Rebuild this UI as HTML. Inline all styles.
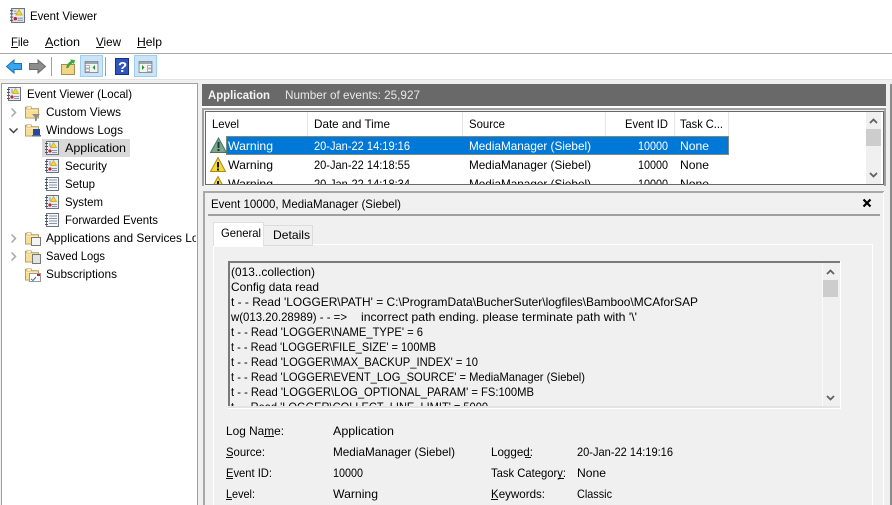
<!DOCTYPE html>
<html><head><meta charset="utf-8"><title>Event Viewer</title>
<style>
html,body{margin:0;padding:0;background:#f0f0f0;overflow:hidden}
svg{display:block}
text{font-family:"Liberation Sans",sans-serif;font-size:12px;fill:#000;white-space:pre}
</style></head><body>
<svg width="892" height="505" viewBox="0 0 892 505" xmlns="http://www.w3.org/2000/svg">
<defs>
<clipPath id="cTree"><rect x="2" y="84" width="194" height="421"/></clipPath>
<clipPath id="cList"><rect x="206" y="112" width="660" height="72"/></clipPath>
<clipPath id="cBody"><rect x="230" y="263" width="592" height="143"/></clipPath>
<symbol id="warn" viewBox="0 0 16 15" overflow="visible">
<path d="M8 .5L15.500 14.500H.5Z" fill="#f7d933" stroke="#a98a12"/>
<rect x="7" y="5" width="2" height="5.500" fill="#111"/><rect x="7" y="11.500" width="2" height="2" fill="#111"/>
</symbol>
<symbol id="log" viewBox="0 0 14 14" overflow="visible">
<rect x="1.500" y=".5" width="12" height="13" fill="#f4f6fa" stroke="#6b7280"/>
<path d="M4 3h8M4 5.500h8M4 8h8M4 10.500h8" stroke="#8b97a8"/>
<path d="M0 2.500h3M0 5.500h3M0 8.500h3M0 11.500h3" stroke="#555"/>
</symbol>
<symbol id="logw" viewBox="0 0 14 14" overflow="visible">
<rect x="1.500" y=".5" width="12" height="13" fill="#e6ebf4" stroke="#6b7280"/>
<path d="M7 9.500h5M7 11.500h5M4 3h2M4 5h2" stroke="#8b97a8"/>
<path d="M0 2.500h3M0 5.500h3M0 8.500h3M0 11.500h3" stroke="#555"/>
<path d="M8.500 1.500l3 5h-6z" fill="#f7d933" stroke="#c9a514" stroke-width=".7"/>
<circle cx="5" cy="10" r="1.600" fill="#c4242b"/>
</symbol>
<symbol id="folder" viewBox="0 0 16 15" overflow="visible">
<path d="M.5 2.500h6l1 1.500h7v10H.5z" fill="#f8dd95" stroke="#b49a5c"/>
<path d="M2 1.500h4.500v3H2z" fill="#fff4cf" stroke="#c5ad70" stroke-width=".7"/>
<path d="M1.500 5.500h12" stroke="#fff3c9"/>
</symbol>
<symbol id="winic" viewBox="0 0 16 14" overflow="visible">
<rect x=".5" y=".5" width="15" height="13" fill="#f4f4f4" stroke="#77838c"/>
<rect x="1" y="1" width="14" height="2.500" fill="#9aa5ad"/>
</symbol>
</defs>

<!-- window base -->
<rect width="892" height="505" fill="#f0f0f0"/>
<rect width="892" height="53" fill="#fff"/>
<rect y="53" width="892" height="1" fill="#a8a8a8"/>
<rect y="54" width="892" height="25" fill="#fff"/>
<rect y="79" width="892" height="1" fill="#e3e3e3"/>

<!-- title -->
<use href="#logw" x="10" y="8" width="15" height="15"/>
<text x="30" y="20" textLength="67" lengthAdjust="spacingAndGlyphs">Event Viewer</text>

<!-- menu -->
<text x="11" y="46" textLength="18" lengthAdjust="spacingAndGlyphs">File</text><rect x="11" y="47" width="7" height="1" fill="#111"/>
<text x="45" y="46" textLength="35" lengthAdjust="spacingAndGlyphs">Action</text><rect x="45" y="47" width="8" height="1" fill="#111"/>
<text x="96" y="46" textLength="25" lengthAdjust="spacingAndGlyphs">View</text><rect x="96" y="47" width="8" height="1" fill="#111"/>
<text x="137" y="46" textLength="25" lengthAdjust="spacingAndGlyphs">Help</text><rect x="137" y="47" width="9" height="1" fill="#111"/>

<!-- toolbar -->
<path d="M6.500 66.500l7.500-6.500v3.500h7.500v6H14v3.500z" fill="#37a6ee" stroke="#1c6fb5"/>
<path d="M45.500 66.500l-7.500-6.500v3.500h-8.500v6H38v3.500z" fill="#8d8d8d" stroke="#6a6a6a"/>
<rect x="51" y="57" width="1" height="19" fill="#a0a0a0"/>
<path d="M61.500 64.500h13v10h-13z" fill="#f4d487" stroke="#a98c4a"/>
<path d="M66 68c1-4 3-6 5-7l-1-1.500 5 .5-1 4.500-1-1.500c-2 1-4 3-4.500 5z" fill="#3fa83f"/>
<rect x="80.500" y="55.500" width="22" height="21" fill="#cce4f7" stroke="#9fcdf0"/>
<use href="#winic" x="84" y="61" width="15" height="12"/>
<rect x="85.500" y="65.500" width="4" height="2.500" fill="#fff" stroke="#8d979e" stroke-width=".7"/>
<rect x="85.500" y="69" width="4" height="2.500" fill="#fff" stroke="#8d979e" stroke-width=".7"/>
<path d="M95 65v5l-2.500-2.500z" fill="#1d9c2c"/>
<rect x="105" y="57" width="1" height="19" fill="#a0a0a0"/>
<rect x="115.500" y="58.500" width="13" height="16" fill="#2f55bd" stroke="#1b2f80"/>
<text x="118" y="72" style="font-weight:bold;font-size:15px;fill:#fff">?</text>
<rect x="134.500" y="55.500" width="22" height="21" fill="#cce4f7" stroke="#9fcdf0"/>
<use href="#winic" x="138" y="61" width="15" height="12"/>
<rect x="147.500" y="65.500" width="4" height="2.500" fill="#fff" stroke="#8d979e" stroke-width=".7"/>
<rect x="147.500" y="69" width="4" height="2.500" fill="#fff" stroke="#8d979e" stroke-width=".7"/>
<path d="M142 65v5l2.500-2.500z" fill="#1d9c2c"/>

<!-- left tree pane -->
<rect x="1.500" y="83.500" width="196" height="422" fill="#fff" stroke="#a0a0a0"/>
<rect x="42" y="139" width="88" height="18" fill="#d9d9d9"/>
<g clip-path="url(#cTree)">
<use href="#logw" x="7" y="87" width="14" height="14"/>
<text x="27" y="98" textLength="105" lengthAdjust="spacingAndGlyphs">Event Viewer (Local)</text>
<path d="M11.500 108.500l4 4-4 4" fill="none" stroke="#a6a6a6" stroke-width="1.500"/>
<use href="#folder" x="25" y="105" width="15" height="14"/>
<path d="M32 114h8l-3 3.500v3l-2 1v-4z" fill="#8a8f94"/>
<text x="46" y="116" textLength="75" lengthAdjust="spacingAndGlyphs">Custom Views</text>
<path d="M9.500 128.500l4 4 4-4" fill="none" stroke="#404040" stroke-width="1.500"/>
<use href="#folder" x="25" y="123" width="15" height="14"/>
<rect x="33" y="129" width="7" height="6" fill="#2647a8"/><rect x="32" y="135" width="9" height="1.500" fill="#5b6b8c"/>
<text x="46" y="134" textLength="77" lengthAdjust="spacingAndGlyphs">Windows Logs</text>
<use href="#logw" x="45" y="141" width="14" height="14"/>
<text x="65" y="152" textLength="61" lengthAdjust="spacingAndGlyphs">Application</text>
<use href="#logw" x="45" y="159" width="14" height="14"/>
<text x="65" y="170" textLength="42" lengthAdjust="spacingAndGlyphs">Security</text>
<use href="#log" x="45" y="177" width="14" height="14"/>
<text x="65" y="188" textLength="30" lengthAdjust="spacingAndGlyphs">Setup</text>
<use href="#logw" x="45" y="195" width="14" height="14"/>
<text x="65" y="206" textLength="38" lengthAdjust="spacingAndGlyphs">System</text>
<use href="#log" x="45" y="213" width="14" height="14"/>
<text x="65" y="224" textLength="93" lengthAdjust="spacingAndGlyphs">Forwarded Events</text>
<path d="M11.500 234.500l4 4-4 4" fill="none" stroke="#a6a6a6" stroke-width="1.500"/>
<use href="#folder" x="25" y="231" width="15" height="14"/>
<rect x="31.500" y="237.500" width="9" height="8" fill="#f4f4f4" stroke="#777"/>
<text x="46" y="242" textLength="165" lengthAdjust="spacingAndGlyphs">Applications and Services Logs</text>
<path d="M11.500 252.500l4 4-4 4" fill="none" stroke="#a6a6a6" stroke-width="1.500"/>
<use href="#folder" x="25" y="249" width="15" height="14"/>
<rect x="32.500" y="254.500" width="8" height="9" fill="#dfe3e6" stroke="#777"/>
<text x="46" y="260" textLength="59" lengthAdjust="spacingAndGlyphs">Saved Logs</text>
<use href="#folder" x="25" y="267" width="15" height="14"/>
<rect x="29.500" y="273.500" width="11" height="8" fill="#fff" stroke="#999"/>
<path d="M31 279l2 1.500 3-3.500" fill="none" stroke="#2a6bc0"/><rect x="37" y="274" width="3" height="2" fill="#c4242b"/>
<text x="46" y="278" textLength="71" lengthAdjust="spacingAndGlyphs">Subscriptions</text>
</g>

<!-- right edge -->
<rect x="890" y="84" width="2" height="421" fill="#8a8a8a"/>

<!-- application header -->
<rect x="202" y="84" width="684" height="22" fill="#696969"/>
<text x="208" y="99" textLength="62" lengthAdjust="spacingAndGlyphs" style="font-weight:bold;fill:#f4f4f4">Application</text>
<text x="285" y="99" textLength="135" lengthAdjust="spacingAndGlyphs" style="fill:#e8e8e8">Number of events: 25,927</text>

<!-- list view -->
<rect x="202" y="106" width="684" height="2" fill="#fff"/>
<rect x="202" y="108" width="684" height="2" fill="#a0a0a0"/>
<rect x="202" y="108" width="2" height="78" fill="#a0a0a0"/>
<rect x="884" y="108" width="2" height="78" fill="#a0a0a0"/>
<rect x="204" y="110" width="680" height="75" fill="#f0f0f0"/>
<rect x="205" y="111" width="678" height="74" fill="#696969"/>
<rect x="206" y="112" width="677" height="72" fill="#fff"/>
<rect x="883" y="111" width="1" height="74" fill="#696969"/>
<path d="M307.500 112v24M462.500 112v24M605.500 112v24M674.500 112v24M728.500 112v24" stroke="#e5e5e5"/>
<text x="212" y="128" textLength="27" lengthAdjust="spacingAndGlyphs">Level</text>
<text x="314" y="128" textLength="76" lengthAdjust="spacingAndGlyphs">Date and Time</text>
<text x="469" y="128" textLength="36" lengthAdjust="spacingAndGlyphs">Source</text>
<text x="625" y="128" textLength="43" lengthAdjust="spacingAndGlyphs">Event ID</text>
<text x="680" y="128" textLength="43" lengthAdjust="spacingAndGlyphs">Task C...</text>
<g clip-path="url(#cList)">
<rect x="226" y="136" width="503" height="19" fill="#0078d7"/>
<rect x="226.500" y="136.500" width="502" height="18" fill="none" stroke="#f0a030" stroke-dasharray="1 1"/>
<path d="M218.500 138L226.500 152.500H210.500Z" fill="#7ba58e" stroke="#4b7460"/>
<rect x="217.500" y="142" width="2" height="6" fill="#1c3a2c"/><rect x="217.500" y="149" width="2" height="2" fill="#1c3a2c"/>
<text x="228" y="150" textLength="45" lengthAdjust="spacingAndGlyphs" style="fill:#fff">Warning</text>
<text x="314" y="150" textLength="96" lengthAdjust="spacingAndGlyphs" style="fill:#fff">20-Jan-22 14:19:16</text>
<text x="469" y="150" textLength="122" lengthAdjust="spacingAndGlyphs" style="fill:#fff">MediaManager (Siebel)</text>
<text x="638" y="150" textLength="30" lengthAdjust="spacingAndGlyphs" style="fill:#fff">10000</text>
<text x="680" y="150" textLength="29" lengthAdjust="spacingAndGlyphs" style="fill:#fff">None</text>
<use href="#warn" x="210" y="157" width="16" height="15"/>
<text x="228" y="169" textLength="45" lengthAdjust="spacingAndGlyphs">Warning</text>
<text x="314" y="169" textLength="96" lengthAdjust="spacingAndGlyphs">20-Jan-22 14:18:55</text>
<text x="469" y="169" textLength="122" lengthAdjust="spacingAndGlyphs">MediaManager (Siebel)</text>
<text x="638" y="169" textLength="30" lengthAdjust="spacingAndGlyphs">10000</text>
<text x="680" y="169" textLength="29" lengthAdjust="spacingAndGlyphs">None</text>
<use href="#warn" x="210" y="176" width="16" height="15"/>
<text x="228" y="188" textLength="45" lengthAdjust="spacingAndGlyphs">Warning</text>
<text x="314" y="188" textLength="96" lengthAdjust="spacingAndGlyphs">20-Jan-22 14:18:34</text>
<text x="469" y="188" textLength="122" lengthAdjust="spacingAndGlyphs">MediaManager (Siebel)</text>
<text x="638" y="188" textLength="30" lengthAdjust="spacingAndGlyphs">10000</text>
<text x="680" y="188" textLength="29" lengthAdjust="spacingAndGlyphs">None</text>
</g>
<rect x="866" y="112" width="15" height="72" fill="#f0f0f0"/>
<rect x="881" y="112" width="2" height="72" fill="#fff"/>
<rect x="866" y="129" width="15" height="17" fill="#cdcdcd"/>
<path d="M870 123l3.500-3.500 3.500 3.500" fill="none" stroke="#606060" stroke-width="1.800"/>
<path d="M870 173l3.500 3.500 3.500-3.500" fill="none" stroke="#606060" stroke-width="1.800"/>

<!-- detail pane -->
<rect x="202" y="186" width="684" height="319" fill="#f0f0f0"/>
<rect x="203" y="191" width="681" height="2" fill="#a8a8a8"/>
<rect x="203" y="191" width="2" height="314" fill="#a8a8a8"/>
<rect x="883" y="192" width="1" height="313" fill="#fff"/>
<text x="211" y="208" textLength="190" lengthAdjust="spacingAndGlyphs">Event 10000, MediaManager (Siebel)</text>
<path d="M863.500 199.500l7 7M870.500 199.500l-7 7" stroke="#000" stroke-width="2.200"/>
<rect x="208" y="214" width="672" height="2" fill="#a0a0a0"/>

<!-- tabs -->
<rect x="213" y="244" width="660" height="1" fill="#fff"/>
<rect x="213" y="245" width="1" height="260" fill="#fff"/>
<rect x="872" y="245" width="1" height="260" fill="#fff"/>
<rect x="263.500" y="225.500" width="49" height="20" fill="#f0f0f0" stroke="#dcdcdc"/>
<rect x="213.500" y="222.500" width="50" height="23" fill="#fff" stroke="#e0e0e0"/>
<rect x="214" y="242" width="49" height="5" fill="#fff"/>
<text x="221" y="237" textLength="40" lengthAdjust="spacingAndGlyphs">General</text>
<text x="273" y="239" textLength="37" lengthAdjust="spacingAndGlyphs">Details</text>

<!-- text box -->
<rect x="228" y="261" width="613" height="148" fill="#fff"/>
<rect x="228" y="261" width="612" height="147" fill="#f0f0f0"/>
<rect x="228" y="261" width="612" height="2" fill="#7a7a7a"/>
<rect x="228" y="261" width="2" height="145" fill="#7a7a7a"/>
<rect x="228" y="406" width="612" height="2" fill="#e3e3e3"/>
<rect x="822" y="263" width="1" height="143" fill="#fafafa"/>
<rect x="823" y="280" width="15" height="17" fill="#cdcdcd"/>
<path d="M827 274l3.500-3.500 3.500 3.500" fill="none" stroke="#606060" stroke-width="1.800"/>
<path d="M827 396l3.500 3.500 3.500-3.500" fill="none" stroke="#606060" stroke-width="1.800"/>
<g clip-path="url(#cBody)">
<text x="231" y="276" textLength="84" lengthAdjust="spacingAndGlyphs">(013..collection)</text>
<text x="231" y="291" textLength="88" lengthAdjust="spacingAndGlyphs">Config data read</text>
<text x="231" y="306" textLength="467" lengthAdjust="spacingAndGlyphs">t - - Read 'LOGGER\PATH' = C:\ProgramData\BucherSuter\logfiles\Bamboo\MCAforSAP</text>
<text x="231" y="321" textLength="116" lengthAdjust="spacingAndGlyphs">w(013.20.28989) - - =&gt;</text>
<text x="361" y="321" textLength="276" lengthAdjust="spacingAndGlyphs">incorrect path ending. please terminate path with '\'</text>
<text x="231" y="336" textLength="192" lengthAdjust="spacingAndGlyphs">t - - Read 'LOGGER\NAME_TYPE' = 6</text>
<text x="231" y="351" textLength="205" lengthAdjust="spacingAndGlyphs">t - - Read 'LOGGER\FILE_SIZE' = 100MB</text>
<text x="231" y="366" textLength="247" lengthAdjust="spacingAndGlyphs">t - - Read 'LOGGER\MAX_BACKUP_INDEX' = 10</text>
<text x="231" y="381" textLength="354" lengthAdjust="spacingAndGlyphs">t - - Read 'LOGGER\EVENT_LOG_SOURCE' = MediaManager (Siebel)</text>
<text x="231" y="396" textLength="303" lengthAdjust="spacingAndGlyphs">t - - Read 'LOGGER\LOG_OPTIONAL_PARAM' = FS:100MB</text>
<text x="231" y="411" textLength="257" lengthAdjust="spacingAndGlyphs">t - - Read 'LOGGER\COLLECT_LINE_LIMIT' = 5000</text>
</g>

<!-- fields -->
<text x="226" y="435" textLength="58" lengthAdjust="spacingAndGlyphs">Log Name:</text><rect x="264" y="436" width="10" height="1" fill="#111"/>
<text x="333" y="435" textLength="61" lengthAdjust="spacingAndGlyphs">Application</text>
<text x="226" y="456" textLength="39" lengthAdjust="spacingAndGlyphs">Source:</text><rect x="226" y="457" width="7" height="1" fill="#111"/>
<text x="333" y="456" textLength="122" lengthAdjust="spacingAndGlyphs">MediaManager (Siebel)</text>
<text x="491" y="456" textLength="42" lengthAdjust="spacingAndGlyphs">Logged:</text><rect x="525" y="457" width="6" height="1" fill="#111"/>
<text x="577" y="456" textLength="96" lengthAdjust="spacingAndGlyphs">20-Jan-22 14:19:16</text>
<text x="226" y="477" textLength="46" lengthAdjust="spacingAndGlyphs">Event ID:</text><rect x="226" y="478" width="7" height="1" fill="#111"/>
<text x="333" y="477" textLength="30" lengthAdjust="spacingAndGlyphs">10000</text>
<text x="491" y="477" textLength="75" lengthAdjust="spacingAndGlyphs">Task Category:</text><rect x="558" y="478" width="6" height="1" fill="#111"/>
<text x="577" y="477" textLength="29" lengthAdjust="spacingAndGlyphs">None</text>
<text x="226" y="498" textLength="29" lengthAdjust="spacingAndGlyphs">Level:</text><rect x="226" y="499" width="6" height="1" fill="#111"/>
<text x="333" y="498" textLength="45" lengthAdjust="spacingAndGlyphs">Warning</text>
<text x="491" y="498" textLength="54" lengthAdjust="spacingAndGlyphs">Keywords:</text><rect x="491" y="499" width="7" height="1" fill="#111"/>
<text x="577" y="498" textLength="35" lengthAdjust="spacingAndGlyphs">Classic</text>
</svg>
</body></html>
